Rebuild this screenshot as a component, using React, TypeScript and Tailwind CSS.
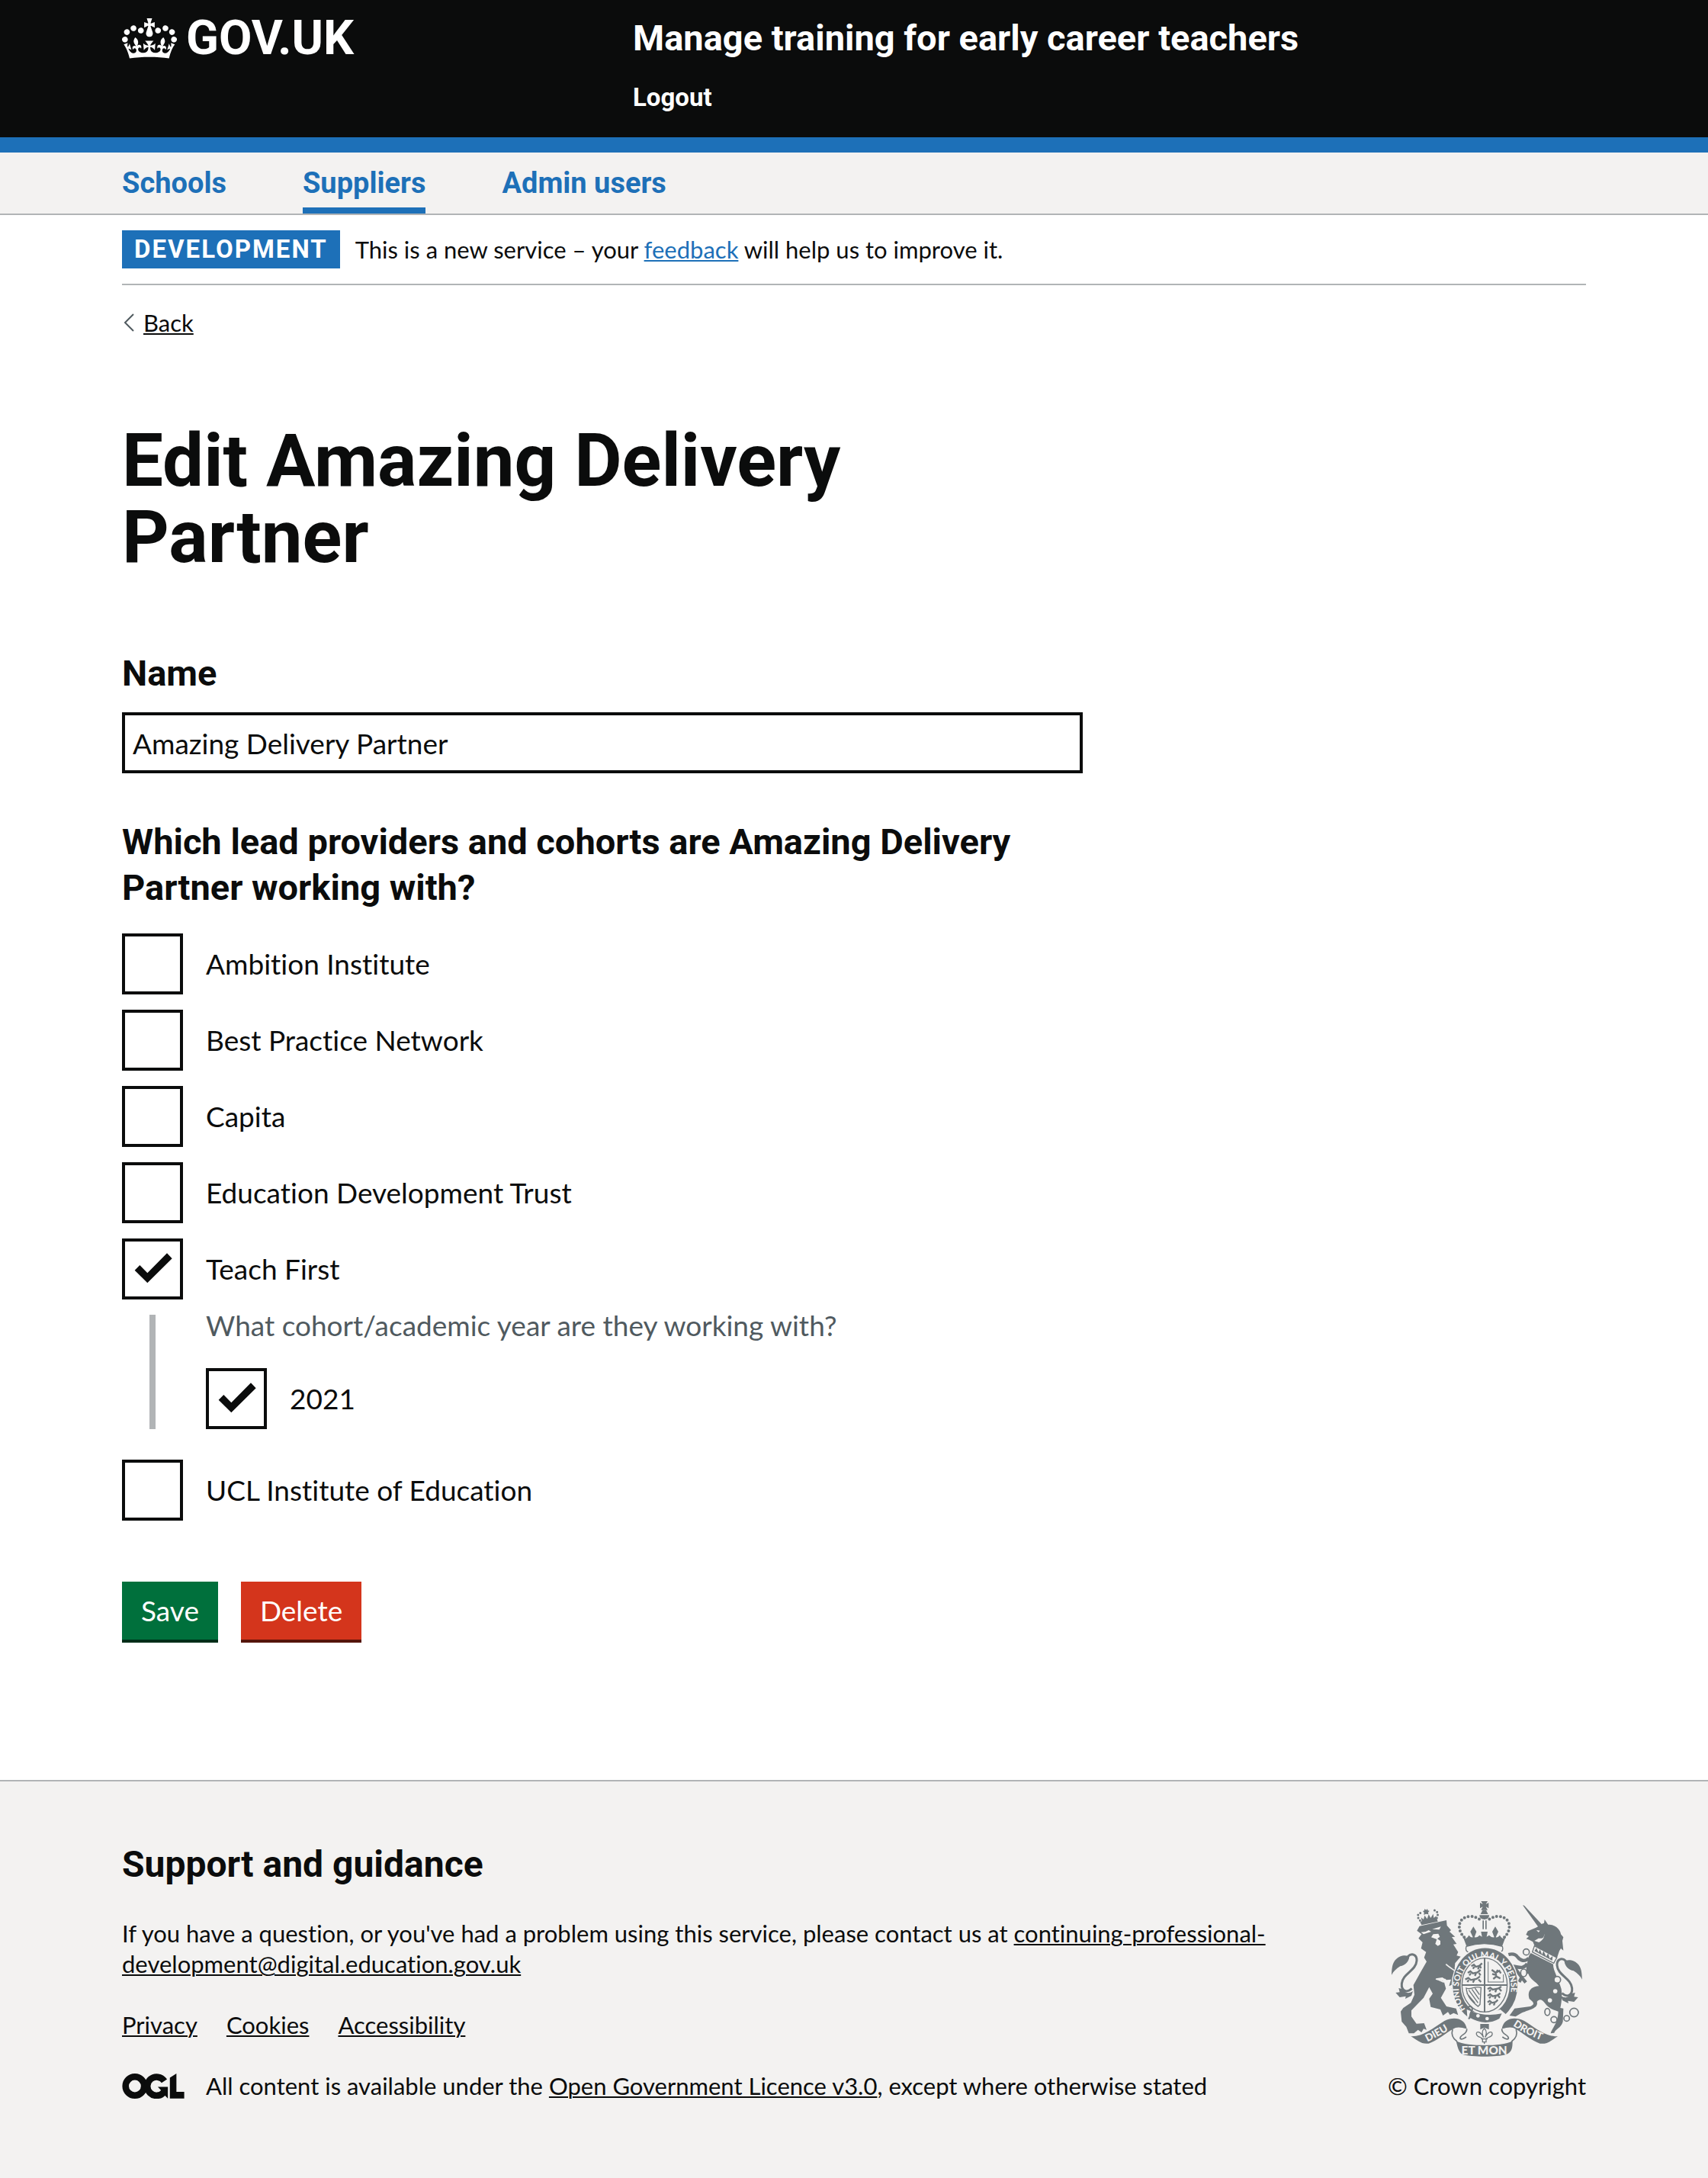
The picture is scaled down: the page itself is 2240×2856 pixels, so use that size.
import React, { useState } from 'react';

const navItems = [
  { label: 'Schools', current: false },
  { label: 'Suppliers', current: true },
  { label: 'Admin users', current: false },
];

const providersBefore = ['Ambition Institute', 'Best Practice Network', 'Capita', 'Education Development Trust'];

function CrownIcon() {
  return (
    <svg viewBox="0 0 132 97" className="h-[53px] w-[72px] shrink-0" fill="currentColor" aria-hidden="true">
      <path
        fillRule="evenodd"
        d="M25 30.2c3.5 1.5 7.7-.2 9.1-3.7 1.5-3.6-.2-7.8-3.9-9.2-3.6-1.4-7.6.3-9.1 3.9-1.4 3.5.3 7.5 3.9 9zM9 39.5c3.6 1.5 7.8-.2 9.2-3.7 1.5-3.6-.2-7.8-3.9-9.1-3.6-1.5-7.6.2-9.1 3.8-1.4 3.5.3 7.5 3.8 9zM4.4 57.2c3.5 1.5 7.7-.2 9.1-3.8 1.5-3.6-.2-7.7-3.9-9.1-3.5-1.5-7.6.3-9.1 3.8-1.4 3.5.3 7.6 3.9 9.1zm38.3-21.4c3.5 1.5 7.7-.2 9.1-3.8 1.5-3.6-.2-7.7-3.9-9.1-3.6-1.5-7.6.3-9.1 3.8-1.3 3.6.4 7.7 3.9 9.1zm64.4-5.6c-3.6 1.5-7.8-.2-9.1-3.7-1.5-3.6.2-7.8 3.8-9.2 3.6-1.4 7.7.3 9.2 3.9 1.3 3.5-.4 7.5-3.9 9zm15.9 9.3c-3.6 1.5-7.7-.2-9.1-3.7-1.5-3.6.2-7.8 3.7-9.1 3.6-1.5 7.7.2 9.2 3.8 1.5 3.5-.3 7.5-3.8 9zm4.7 17.7c-3.6 1.5-7.8-.2-9.2-3.8-1.5-3.6.2-7.7 3.9-9.1 3.6-1.5 7.7.3 9.2 3.8 1.3 3.5-.4 7.6-3.9 9.1zM89.3 35.8c-3.6 1.5-7.8-.2-9.2-3.8-1.4-3.6.2-7.7 3.9-9.1 3.6-1.5 7.7.3 9.2 3.8 1.4 3.6-.3 7.7-3.9 9.1zM69.7 17.7l8.9 4.7V9.3l-8.9 2.8c-.2-.3-.5-.6-.9-.9L72.4 0H59.6l3.5 11.2c-.3.3-.6.5-.9.9l-8.8-2.8v13.1l8.8-4.7c.3.3.6.7.9.9l-5 15.4v.1c-.2.8-.4 1.6-.4 2.4 0 4.1 3.1 7.5 7 8.1h.2c.3 0 .7.1 1 .1.4 0 .7 0 1-.1h.2c4-.6 7.1-4.1 7.1-8.1 0-.8-.1-1.7-.4-2.4V34l-5.1-15.4c.4-.2.7-.6 1-.9zM66 92.8c16.9 0 32.8 1.1 47.1 3.2 4-16.9 8.9-26.7 14-33.5l-9.6-3.4c1 4.9 1.1 7.2 0 10.2-1.5-1.4-3-4.3-4.2-8.7L108.6 76c2.8-2 5-3.2 7.5-3.3-4.4 9.4-10 11.9-13.6 11.2-4.3-.8-6.3-4.6-5.6-7.9 1-4.7 5.7-5.9 8-.5 4.3-8.7-3-11.4-7.6-8.8 7.1-7.2 7.9-13.5 2.1-21.1-8 6.1-8.1 12.3-4.5 20.8-4.7-5.4-12.1-2.5-9.5 6.2 3.4-5.2 7.9-2 7.2 3.1-.6 4.3-6.4 7.8-13.5 7.2-10.3-.9-10.9-8-11.2-13.8 2.5-.5 7.1 1.8 11 7.3L80.2 60c-4.1 4.4-8 5.3-12.3 5.4 1.4-4.4 8-11.6 8-11.6H55.5s6.4 7.2 7.9 11.6c-4.2-.1-8-1-12.3-5.4l1.4 16.4c3.9-5.5 8.5-7.7 10.9-7.3-.3 5.8-.9 12.8-11.1 13.8-7.2.6-12.9-2.9-13.5-7.2-.7-5 3.8-8.3 7.1-3.1 2.7-8.7-4.6-11.6-9.4-6.2 3.7-8.5 3.6-14.7-4.6-20.8-5.8 7.6-5 13.9 2.2 21.1-4.7-2.6-11.9.1-7.7 8.8 2.3-5.5 7.1-4.2 8.1.5.7 3.3-1.3 7.1-5.7 7.9-3.5.7-9-1.8-13.5-11.2 2.5.1 4.7 1.3 7.5 3.3l-4.7-15.4c-1.2 4.4-2.7 7.2-4.3 8.7-1.1-3-.9-5.3 0-10.2l-9.5 3.4c5 6.9 9.9 16.7 14 33.5 14.8-2.1 30.8-3.2 47.7-3.2z"
      />
    </svg>
  );
}

function LicenceLogo() {
  return (
    <svg viewBox="0 0 246 100" className="h-[33px] w-[82px] shrink-0" role="img" aria-label="Open Government Licence">
      <circle cx="50" cy="50" r="37" fill="none" stroke="#0b0c0c" strokeWidth="26" />
      <path d="M167 30 A37 37 0 1 0 165 74" fill="none" stroke="#0b0c0c" strokeWidth="26" />
      <path d="M141 53h40v46l-11-11-12-9-4-12z" fill="#0b0c0c" />
      <path d="M189 17L215 0v73h31v26h-57z" fill="#0b0c0c" />
    </svg>
  );
}

function Ribbon() {
  return (
    <g>
      <path d="M148 598 C195 600 235 565 280 537 C320 517 362 528 368 568 C345 562 328 558 312 570 C285 585 250 616 218 626 C188 630 172 612 148 598z" />
      <path
        d="M312 570 C306 590 312 606 330 618 M368 568 C370 592 340 590 342 606 C346 612 358 606 366 600"
        fill="none"
        stroke="currentColor"
        strokeWidth="5"
      />
    </g>
  );
}

function Tail() {
  return (
    <g>
      <path d="M72 356 C74 330 72 300 104 284 C122 276 136 280 142 284 C140 304 126 318 106 322 C90 332 80 342 72 356z" />
      <path
        d="M136 284 C152 268 172 276 171 300 C168 340 116 350 112 390 C110 416 128 430 152 410"
        fill="none"
        stroke="currentColor"
        strokeWidth="9"
      />
      <path d="M88 426 L104 424 L100 408 L116 412 C122 426 138 432 156 420 L150 438 L126 450 L128 440 L104 444z" />
    </g>
  );
}

function RoyalArms() {
  const bg = '#f3f2f1';
  return (
    <svg viewBox="72 66 750 612" className="h-[204px] w-[250px] text-[#6f777b]" fill="currentColor" aria-hidden="true">
      {/* crown */}
      <path d="M424 66h26l-7 12 11-6v22l-11-6 7 13h-26l7-13-11 6V72l11 6z" />
      <path d="M422 117l8-16h14l8 16z" />
      <path d="M418 121h38c0 12-9 17-19 17s-19-5-19-17z" />
      <path d="M430 142h5v34h-5zM441 142h5v34h-5z" />
      <path
        d="M358 208 C326 176 334 130 378 126 C400 124 412 134 424 140 M516 208 C548 176 540 130 496 126 C474 124 462 134 450 140"
        fill="none"
        stroke="currentColor"
        strokeWidth="12"
        strokeLinecap="round"
        strokeDasharray="0 15"
      />
      <path d="M350 198 L362 214 Q372 210 376 200 Q384 210 392 208 L382 186 L394 166 L406 186 L398 208 Q410 210 418 200 L428 206 L424 186 L450 186 L446 206 L456 200 Q466 210 476 208 L468 186 L480 166 L492 186 L482 208 Q490 210 498 200 Q502 210 512 214 L524 198 L506 246 Q437 226 368 246z" />
      <path d="M366 244 Q437 222 508 244 Q514 262 498 268 Q437 242 376 268 Q360 262 366 244z" fill={bg} stroke="currentColor" strokeWidth="4" />

      {/* lion */}
      <path d="M172 182 L182 164 L288 141 L290 162 L306 180 L300 186 L322 206 L309 207 L328 234 L315 236 L334 266 L328 280 L344 284 L322 310 L320 330 L336 350 L330 366 L346 400 L344 424 L334 410 L326 424 L320 406 L308 412 L312 394 L298 400 L306 374 L288 376 L272 366 L246 370 L278 382 L286 410 L266 446 L288 480 L326 488 L334 514 L316 506 L302 514 L294 502 L274 516 L264 492 L226 482 L220 450 L234 430 L220 404 L198 446 L150 496 L150 520 L170 548 L200 546 L210 572 L198 568 L190 582 L176 572 L160 586 L140 586 L130 560 L112 540 L108 500 L118 486 L148 466 L162 434 L158 396 L186 346 L210 304 L200 288 L208 266 L188 252 L194 228 L178 212 L190 196z" />
      <path d="M188 188 L206 186 L218 180 L228 186 L198 196z M232 176 L266 166 L260 178z M236 196 L256 194 L262 206 L252 214 L264 222 L264 236 L254 242 L244 234 L250 216 L228 208z" fill={bg} />
      <path d="M286 314 C304 332 330 340 346 364" fill="none" stroke={bg} strokeWidth="5" />
      <path d="M246 372 L258 376 L276 384 L284 372" fill="none" stroke={bg} strokeWidth="5" />
      <g>
        <path d="M184 146 L250 134 L254 146 L190 160z" />
        <path
          d="M184 142 C168 124 176 112 196 110 M250 132 C260 112 248 98 230 102"
          fill="none"
          stroke="currentColor"
          strokeWidth="9"
          strokeLinecap="round"
          strokeDasharray="0 12"
        />
        <path d="M192 148 L188 130 L198 138 L202 122 L212 136 L218 118 L226 132 L236 116 L238 132 L248 124 L246 142z" />
        <path d="M202 96l6 5 5-5 2 7 6 1-5 6 1 8-10-2-8 4 1-9-5-6 6-2z" />
      </g>
      <Tail />

      {/* unicorn */}
      <path d="M588 82 L594 83 L662 156 L672 152 L674 138 L688 158 C722 158 738 184 738 196 L748 208 L744 222 L748 260 L738 252 L732 262 L722 292 L634 240 L628 226 L614 218 L602 214 L612 204 L601 198 L608 184 L640 170 L648 166z" />
      <path d="M634 222 L652 228 C668 220 676 204 672 194 C674 212 662 214 650 212z M642 180 L656 182 L650 188z" fill={bg} />
      <path d="M634 242 L722 288 L710 310 L626 266z" fill={bg} stroke="currentColor" strokeWidth="4" />
      <path d="M634 262 L642 250 L650 268 L656 256 L664 276 L670 262 L680 284 L688 270 L694 292 L706 282 L704 300z" />
      <path d="M620 270 L708 314 C706 336 730 374 740 412 C744 440 740 470 736 486 L748 488 L746 540 C740 564 716 570 712 584 L698 586 C706 560 726 548 728 500 C706 492 690 488 676 468 C664 450 652 450 644 462 C652 490 604 494 580 508 L560 520 L536 516 L556 488 L618 480 C640 470 628 462 614 450 C604 420 622 402 652 400 C640 382 618 376 610 352 L600 350 L604 316 C610 300 606 286 620 270z" />
      <path
        d="M606 312 C590 336 570 324 552 322 L584 366 L600 386 M584 366 L574 384 M612 290 C596 306 578 300 568 286 C560 274 546 272 532 276 M552 322 L544 336"
        fill="none"
        stroke="currentColor"
        strokeWidth="13"
      />
      <g transform="translate(894 18) scale(-1 1)">
        <Tail />
      </g>
      <g fill={bg} stroke="currentColor" strokeWidth="5">
        <circle cx="602" cy="266" r="12" />
        <ellipse cx="592" cy="348" rx="12" ry="15" />
        <circle cx="724" cy="375" r="13" />
        <circle cx="716" cy="420" r="11" />
        <circle cx="695" cy="456" r="11" />
        <ellipse cx="685" cy="502" rx="10" ry="14" />
        <circle cx="711" cy="532" r="12" />
        <circle cx="761" cy="527" r="11" />
        <circle cx="790" cy="504" r="17" />
      </g>

      {/* garter and shield */}
      <ellipse cx="440" cy="397" rx="132" ry="152" fill={bg} />
      <ellipse cx="440" cy="397" rx="112" ry="131" fill="none" stroke="currentColor" strokeWidth="31" />
      <ellipse cx="438" cy="396" rx="89" ry="106" fill={bg} stroke="currentColor" strokeWidth="4" />
      <path d="M435 290h6v212h-6zM350 393h177v6H350z" />
      <path id="garter-line" d="M366 496 A103 122 0 1 1 514 494" fill="none" />
      <text fill={bg} fontSize="33" fontWeight="900" fontFamily="Lato, sans-serif">
        <textPath href="#garter-line" startOffset="1%">
          HONI SOIT QUI MAL Y PENSE
        </textPath>
      </text>
      {/* lions passant */}
      <g fill="none" stroke="currentColor" strokeWidth="7">
        <path d="M386 322l10-6 8 8 14-4 10-10M392 332l6-8M412 334l4-10M424 330l-4-8" />
        <path d="M372 348l10-6 10 8 18-4 12-10M378 358l6-8M400 360l4-10M422 358l-6-10" />
        <path d="M362 374l12-6 10 8 22-4 14-10M370 384l6-8M392 386l6-12M424 384l-10-10" />
        <path d="M450 412l10-6 10 8 20-4 14-8M456 422l6-8M480 424l4-10M504 420l-8-10" />
        <path d="M450 438l10-6 10 8 18-4 12-8M456 448l6-8M478 450l4-10M498 446l-8-10" />
        <path d="M450 464l8-6 10 8 14-4 8-8M456 474l6-8M474 476l4-10" />
        <path d="M466 336l16 12 2 14-12 10M482 348l14-8 6 10M484 362l16 8M468 352l12 4M490 336l-6 10" />
      </g>
      <path d="M450 384h64M452 304v80M512 354v30" fill="none" stroke="currentColor" strokeWidth="3" />
      <path
        d="M366 408 C386 418 400 396 424 406 L420 472 L412 480 C388 460 368 440 366 408z M376 416L412 466M388 412L416 452M400 408L418 434M368 428L400 466"
        fill="none"
        stroke="currentColor"
        strokeWidth="4"
      />

      {/* strap and buckle */}
      <path d="M368 492 Q430 520 500 492 L528 516 Q450 570 370 524z" fill={bg} />
      <path d="M384 498 Q440 522 506 508 L496 528 Q440 560 376 522z" />
      <g fill={bg}>
        <circle cx="412" cy="517" r="7" />
        <circle cx="448" cy="528" r="7" />
      </g>
      <path d="M366 490 C378 470 400 484 384 504 C378 516 388 524 374 528" fill="none" stroke="currentColor" strokeWidth="6" />

      {/* ribbons */}
      <Ribbon />
      <g transform="translate(874 0) scale(-1 1)">
        <Ribbon />
      </g>
      <path d="M326 616 C350 630 395 633 437 633 C480 633 525 630 548 616 C548 645 545 662 522 669 C485 680 390 680 352 669 C335 660 332 640 326 616z" />
      <path id="dieu-line" d="M213 619 Q262 596 326 554" fill="none" />
      <path id="droit-line" d="M549 556 Q602 592 680 620" fill="none" />
      <g fill={bg} fontWeight="900" fontFamily="Lato, sans-serif">
        <text x="437" y="669" fontSize="46" textAnchor="middle">
          ET MON
        </text>
        <text fontSize="40">
          <textPath href="#dieu-line">DIEU</textPath>
        </text>
        <text fontSize="40">
          <textPath href="#droit-line">DROIT</textPath>
        </text>
      </g>

      {/* fleur */}
      <path d="M421 549h34v22l-18-8-16 8z" />
      <path
        d="M437 566 C424 578 430 592 434 602 C420 576 404 576 406 590 C410 604 426 598 430 608 L430 620 L444 620 L444 608 C448 598 466 604 468 590 C470 576 454 576 440 602 C444 592 450 578 437 566z M424 608h26M437 620v8"
        fill="none"
        stroke="currentColor"
        strokeWidth="4"
      />
    </svg>
  );
}

function Checkbox({ id, label, defaultChecked = false }: { id: string; label: string; defaultChecked?: boolean }) {
  return (
    <div className="flex items-center">
      <div className="relative h-20 w-20 shrink-0">
        <input
          id={id}
          type="checkbox"
          defaultChecked={defaultChecked}
          className="peer block h-20 w-20 appearance-none border-4 border-[#0b0c0c] bg-transparent"
        />
        <svg
          viewBox="0 0 240 240"
          className="pointer-events-none absolute inset-0 hidden h-20 w-20 peer-checked:block"
          fill="#0b0c0c"
          aria-hidden="true"
        >
          <path d="M50 125L70 105l30 31 77-78 20 21-97 96z" />
        </svg>
      </div>
      <label htmlFor={id} className="pl-[30px] text-[37px] leading-[50px]">
        {label}
      </label>
    </div>
  );
}

const headingFont = 'font-[Roboto,sans-serif] font-bold';
const darkLink = 'underline decoration-2 underline-offset-2';

export default function App() {
  const [name, setName] = useState('Amazing Delivery Partner');

  return (
    <div className="flex min-h-screen flex-col bg-white font-[Lato,sans-serif] text-[#0b0c0c] [font-variant-ligatures:none]">
      <header className={`border-b-[20px] border-[#1d70b8] bg-[#0b0c0c] px-[60px] text-white ${headingFont}`}>
        <div className="mx-auto flex max-w-[1920px] pt-5 pb-8">
          <div className="w-1/3">
            <a href="#" className="flex h-[60px] items-center gap-3">
              <CrownIcon />
              <span className="text-[63px] leading-[60px]">GOV.UK</span>
            </a>
          </div>
          <div className="w-2/3 pl-[30px]">
            <a href="#" className="block text-[47px] leading-[60px]">
              Manage training for early career teachers
            </a>
            <a href="#" className="mt-7 inline-block text-[33px] leading-10">
              Logout
            </a>
          </div>
        </div>
      </header>

      <nav aria-label="Primary" className="border-b-2 border-[#b1b4b6] bg-[#f3f2f1] px-[60px]">
        <ul className="mx-auto flex max-w-[1920px] gap-[100px]">
          {navItems.map((item) => (
            <li key={item.label}>
              <a
                href="#"
                aria-current={item.current ? 'page' : undefined}
                className={`block border-b-8 pt-2 text-[38px] leading-[64px] text-[#1d70b8] ${headingFont} ${
                  item.current ? 'border-[#1d70b8]' : 'border-transparent'
                }`}
              >
                {item.label}
              </a>
            </li>
          ))}
        </ul>
      </nav>

      <div className="px-[60px]">
        <div className="mx-auto max-w-[1920px]">
          <div className="flex items-center gap-5 border-b-2 border-[#b1b4b6] py-5">
            <strong className={`bg-[#1d70b8] px-4 text-[33px] leading-[50px] tracking-[2px] text-white ${headingFont}`}>
              DEVELOPMENT
            </strong>
            <p className="text-[31px] leading-[50px]">
              This is a new service – your{' '}
              <a href="#" className="text-[#1d70b8] underline decoration-2 underline-offset-2">
                feedback
              </a>{' '}
              will help us to improve it.
            </p>
          </div>

          <a href="#" className="mt-[29px] flex w-fit items-center gap-3 text-[31px] leading-10">
            <svg viewBox="0 0 16 24" className="h-6 w-4" fill="none" stroke="#505a5f" strokeWidth="2" aria-hidden="true">
              <path d="M15 1L4 12l11 11" />
            </svg>
            <span className={darkLink}>Back</span>
          </a>

          <main className="max-w-[1260px] pt-[111px] pb-[180px]">
            <h1 className={`text-[96px] leading-[100px] ${headingFont}`}>Edit Amazing Delivery Partner</h1>

            <form className="mt-[99px]" onSubmit={(e) => e.preventDefault()}>
              <label htmlFor="name" className={`block text-[47px] leading-[60px] ${headingFont}`}>
                Name
              </label>
              <input
                id="name"
                type="text"
                value={name}
                onChange={(e) => setName(e.target.value)}
                className="mt-[21px] block h-20 w-full border-4 border-[#0b0c0c] px-[10px] text-[37px] leading-[50px]"
              />

              <fieldset className="mt-[60px]">
                <legend className={`text-[47px] leading-[60px] ${headingFont}`}>
                  Which lead providers and cohorts are Amazing Delivery Partner working with?
                </legend>
                <div className="flex flex-col gap-5 pt-[30px]">
                  {providersBefore.map((provider, i) => (
                    <Checkbox key={provider} id={`provider-${i}`} label={provider} />
                  ))}
                  <Checkbox id="provider-teach-first" label="Teach First" defaultChecked />
                  <div
                    role="group"
                    aria-labelledby="cohort-hint"
                    className="mb-5 ml-9 border-l-8 border-[#b1b4b6] pl-[66px]"
                  >
                    <p id="cohort-hint" className="text-[37px] leading-7 text-[#505a5f]">
                      What cohort/academic year are they working with?
                    </p>
                    <div className="mt-[42px]">
                      <Checkbox id="cohort-2021" label="2021" defaultChecked />
                    </div>
                  </div>
                  <Checkbox id="provider-ucl" label="UCL Institute of Education" />
                </div>
              </fieldset>

              <div className="mt-20 flex gap-[30px] text-[37px] text-white">
                <button type="submit" className="h-20 border-b-4 border-[#002d18] bg-[#00703c] px-[25px]">
                  Save
                </button>
                <button type="button" className="h-20 border-b-4 border-[#55150b] bg-[#d4351c] px-[25px]">
                  Delete
                </button>
              </div>
            </form>
          </main>
        </div>
      </div>

      <footer className="flex-1 border-t-2 border-[#b1b4b6] bg-[#f3f2f1] px-[60px] pt-[79px] pb-[60px]">
        <div className="mx-auto flex max-w-[1920px] items-end justify-between gap-[60px] text-[31px] leading-10">
          <div className="max-w-[1590px]">
            <h2 className={`text-[48px] leading-[60px] ${headingFont}`}>Support and guidance</h2>
            <p className="mt-10">
              If you have a question, or you've had a problem using this service, please contact us at{' '}
              <a href="#" className={darkLink}>
                continuing-professional-development@digital.education.gov.uk
              </a>
            </p>
            <ul className="mt-10 flex gap-[38px]">
              {['Privacy', 'Cookies', 'Accessibility'].map((label) => (
                <li key={label}>
                  <a href="#" className={darkLink}>
                    {label}
                  </a>
                </li>
              ))}
            </ul>
            <div className="mt-10 flex items-center gap-7">
              <LicenceLogo />
              <p>
                All content is available under the{' '}
                <a href="#" className={darkLink}>
                  Open Government Licence v3.0
                </a>
                , except where otherwise stated
              </p>
            </div>
          </div>
          <a href="#" className="flex shrink-0 flex-col items-center gap-[18px] whitespace-nowrap">
            <RoyalArms />
            © Crown copyright
          </a>
        </div>
      </footer>
    </div>
  );
}
